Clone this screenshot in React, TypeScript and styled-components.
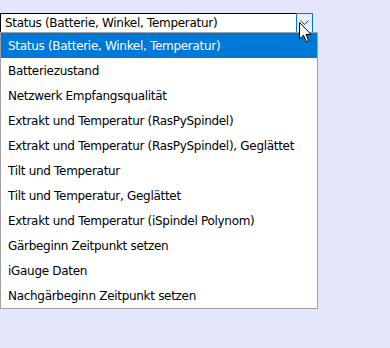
import React from "react";
import styled, { createGlobalStyle } from "styled-components";

const GlobalStyle = createGlobalStyle`
  html, body {
    margin: 0;
    padding: 0;
    background: #e6e6fa;
  }
`;

const options = [
  "Status (Batterie, Winkel, Temperatur)",
  "Batteriezustand",
  "Netzwerk Empfangsqualität",
  "Extrakt und Temperatur (RasPySpindel)",
  "Extrakt und Temperatur (RasPySpindel), Geglättet",
  "Tilt und Temperatur",
  "Tilt und Temperatur, Geglättet",
  "Extrakt und Temperatur (iSpindel Polynom)",
  "Gärbeginn Zeitpunkt setzen",
  "iGauge Daten",
  "Nachgärbeginn Zeitpunkt setzen",
];

function Cursor() {
  return (
    <CursorSvg width="13" height="21" viewBox="0 0 13 21">
      <path
        d="M0.5 0.5 L0.5 17 L4.5 13.2 L7.2 19.6 L9.6 18.6 L7 12.4 L12 12.4 Z"
        fill="#fff"
        stroke="#000"
        strokeWidth="1"
        strokeLinejoin="miter"
      />
    </CursorSvg>
  );
}

function App() {
  return (
    <>
      <GlobalStyle />
      <Page>
        <SelectWrap>
          <SelectBox>
            <SelectText>{options[0]}</SelectText>
            <ArrowButton>
              <svg width="9" height="6" viewBox="0 0 9 6">
                <path d="M0.5 0.5 L4.5 4.5 L8.5 0.5" fill="none" stroke="#333" strokeWidth="1" />
              </svg>
            </ArrowButton>
          </SelectBox>
          <Cursor />
          <List>
            {options.map((o, i) => (
              <Option key={o} $selected={i === 0}>
                {o}
              </Option>
            ))}
          </List>
        </SelectWrap>
      </Page>
    </>
  );
}

export default App;

const Page = styled.div`
  width: 390px;
  height: 348px;
  padding-top: 13px;
  box-sizing: border-box;
  font-family: "DejaVu Sans", Verdana, sans-serif;
  font-size: 12px;
  letter-spacing: -0.3px;
  color: #000;
`;

const SelectWrap = styled.div`
  position: relative;
  width: 318px;
`;

const SelectBox = styled.div`
  width: 313px;
  height: 20px;
  box-sizing: border-box;
  border: 1px solid #000;
  background: #fff;
  display: flex;
  align-items: center;
`;

const SelectText = styled.span`
  flex: 1;
  padding-left: 4px;
  white-space: nowrap;
`;

const ArrowButton = styled.div`
  width: 17px;
  height: 20px;
  margin: -1px -1px -1px 0;
  box-sizing: border-box;
  border: 1px solid #0078d7;
  background: #e5f1fb;
  display: flex;
  align-items: center;
  justify-content: center;
`;

const CursorSvg = styled.svg`
  position: absolute;
  left: 299px;
  top: 9px;
  z-index: 3;
`;

const List = styled.div`
  position: absolute;
  top: 19px;
  left: 0;
  width: 318px;
  box-sizing: border-box;
  border: 1px solid #a0a0a0;
  background: #fff;
  z-index: 2;
`;

const Option = styled.div<{ $selected?: boolean }>`
  height: 25px;
  line-height: 26px;
  padding-left: 7px;
  white-space: nowrap;
  background: ${(p) => (p.$selected ? "#0078d7" : "#fff")};
  color: ${(p) => (p.$selected ? "#fff" : "#000")};
`;
